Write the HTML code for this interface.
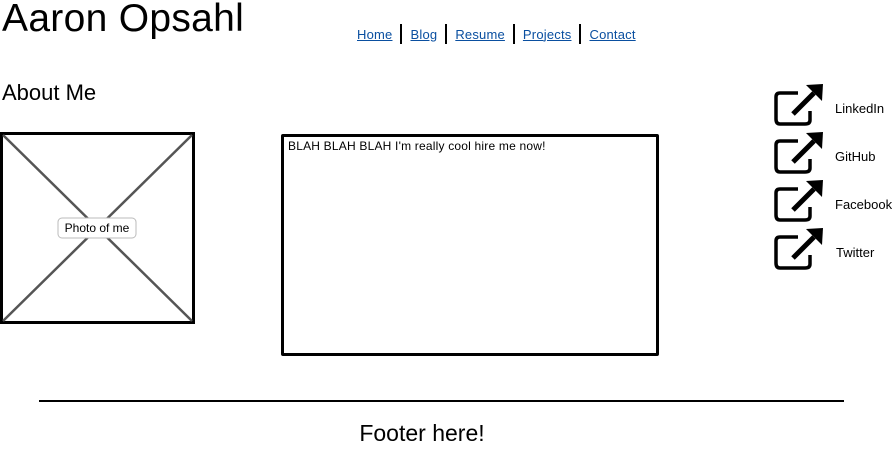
<!DOCTYPE html>
<html><head><style>
body{margin:0;width:892px;height:450px;background:#fff;font-family:"Liberation Sans",sans-serif;color:#000;position:relative;overflow:hidden}
.a{position:absolute}
.nav a{color:#0a4fa0;text-decoration:underline;font-size:13px;letter-spacing:0.2px}
.lbl{font-size:13px}
</style></head><body>
<div class="a" style="left:2px;top:-3px;font-size:39px;letter-spacing:0.3px">Aaron Opsahl</div>
<div class="a nav" style="left:357px;top:24px;display:flex;align-items:center;font-size:13px">
<a>Home</a><span style="display:inline-block;width:2px;height:20px;background:#000;margin:0 8px"></span>
<a>Blog</a><span style="display:inline-block;width:2px;height:20px;background:#000;margin:0 8px"></span>
<a>Resume</a><span style="display:inline-block;width:2px;height:20px;background:#000;margin:0 8px"></span>
<a>Projects</a><span style="display:inline-block;width:2px;height:20px;background:#000;margin:0 8px"></span>
<a>Contact</a></div>
<div class="a" style="left:2px;top:80px;font-size:22px">About Me</div>
<svg class="a" style="left:0;top:132px" width="196" height="193">
<rect x="1.5" y="1.5" width="192" height="189" fill="#fff" stroke="#000" stroke-width="3"/>
<line x1="3" y1="3" x2="192" y2="189" stroke="#555" stroke-width="2.5"/>
<line x1="192" y1="3" x2="3" y2="189" stroke="#555" stroke-width="2.5"/>
<rect x="58" y="86" width="78" height="20" rx="4" fill="#fff" stroke="#bbb"/>
<text x="97" y="100" font-size="12" text-anchor="middle" font-family="Liberation Sans">Photo of me</text>
</svg>
<div class="a" style="left:281px;top:134px;width:372px;height:216px;border:3px solid #000;border-radius:2px"></div>
<div class="a" style="left:288px;top:139px;font-size:12px;letter-spacing:0.2px">BLAH BLAH BLAH I'm really cool hire me now!</div>
<svg class="a" style="left:770px;top:82px" width="60" height="200">
<defs><g id="ic">
<path d="M798 93 H780 Q776 93 776 97 V119 Q776 124 780 124 H805 Q810 124 810 120 V111" fill="none" stroke="#000" stroke-width="3.5"/>
<line x1="793" y1="114" x2="814" y2="93" stroke="#000" stroke-width="5"/>
<polygon points="806,85 823,84 822,101" fill="#000"/>
</g></defs>
<g transform="translate(-770,-82)"><use href="#ic"/><use href="#ic" y="48"/><use href="#ic" y="96"/><use href="#ic" y="144"/></g>
</svg>
<div class="a lbl" style="left:835px;top:101px">LinkedIn</div>
<div class="a lbl" style="left:835px;top:149px">GitHub</div>
<div class="a lbl" style="left:835px;top:197px">Facebook</div>
<div class="a lbl" style="left:836px;top:245px">Twitter</div>
<div class="a" style="left:39px;top:400px;width:805px;height:2px;background:#000"></div>
<div class="a" style="left:0;width:844px;text-align:center;top:420px;font-size:23px">Footer here!</div>
</body></html>
